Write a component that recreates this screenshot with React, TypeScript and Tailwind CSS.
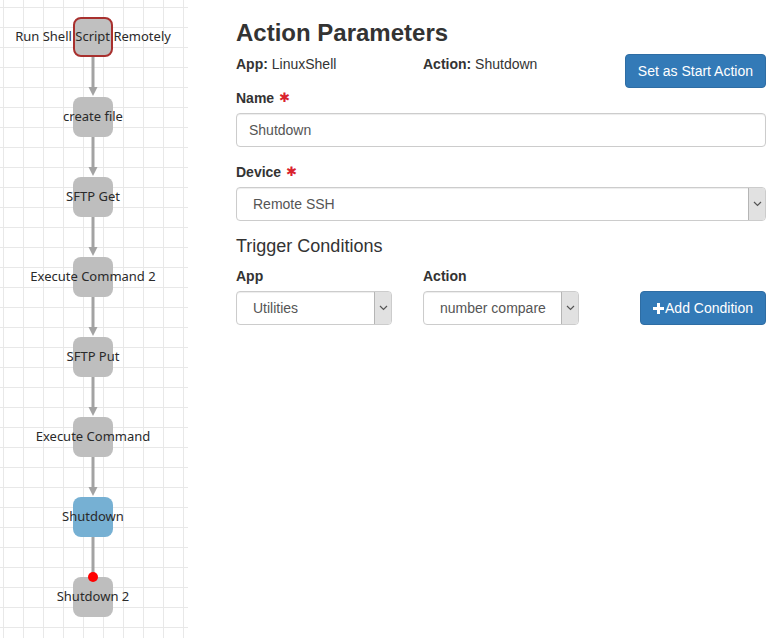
import React from "react";

const nodes = [
  { label: "Run Shell Script Remotely", kind: "start" },
  { label: "create file", kind: "normal" },
  { label: "SFTP Get", kind: "normal" },
  { label: "Execute Command 2", kind: "normal" },
  { label: "SFTP Put", kind: "normal" },
  { label: "Execute Command", kind: "normal" },
  { label: "Shutdown", kind: "selected" },
  { label: "Shutdown 2", kind: "normal" },
];

function Chevron() {
  return (
    <svg width="9" height="6" viewBox="0 0 9 6" className="block">
      <path d="M1 1 L4.5 4.5 L8 1" fill="none" stroke="#555" strokeWidth="1.2" />
    </svg>
  );
}

function FakeSelect({ value, className }: { value: string; className: string }) {
  return (
    <div
      className={`flex h-[34px] items-stretch rounded-[4px] border border-[#ccc] bg-white shadow-[inset_0_1px_1px_rgba(0,0,0,0.075)] ${className}`}
    >
      <div className="flex flex-1 items-center pl-[16px] text-[14px] text-[#555]">{value}</div>
      <div className="flex w-[17px] items-center justify-center rounded-r-[3px] border-l border-[#b5b5b5] bg-[#e1e1e1]">
        <Chevron />
      </div>
    </div>
  );
}

function Asterisk() {
  return <span className="ml-[5px] font-['DejaVu_Sans',sans-serif] text-[13px] text-[#d9232d]">✱</span>;
}

export default function App() {
  return (
    <div className="flex h-[638px] w-[775px] bg-white font-['Liberation_Sans',Arial,sans-serif] text-[#333]">
      {/* Canvas */}
      <div className="relative h-[638px] w-[188px] shrink-0 bg-white bg-[linear-gradient(to_right,#e8e8e8_1px,transparent_1px),linear-gradient(to_bottom,#e8e8e8_1px,transparent_1px)] bg-[size:20px_20px] bg-[position:3px_7px]">
        <svg className="absolute left-0 top-0" width="188" height="638">
          {nodes.slice(0, -1).map((_, i) => {
            const y0 = 57 + 80 * i;
            const last = i === nodes.length - 2;
            return (
              <g key={i}>
                <line x1="93" y1={y0} x2="93" y2={last ? 577 : y0 + 31} stroke="#a3a3a3" strokeWidth="3" />
                {!last && (
                  <polygon points={`88.5,${y0 + 30} 97.5,${y0 + 30} 93,${y0 + 39}`} fill="#a3a3a3" />
                )}
              </g>
            );
          })}
        </svg>
        {nodes.map((n, i) => {
          const top = 17 + 80 * i;
          const box =
            n.kind === "start"
              ? "bg-[#c0c0c0] border-2 border-[#a8302e]"
              : n.kind === "selected"
              ? "bg-[#76b0d3]"
              : "bg-[#bebebe]";
          return (
            <div
              key={i}
              className={`absolute left-[73px] h-[40px] w-[40px] rounded-[8px] ${box}`}
              style={{ top }}
            />
          );
        })}
        {nodes.map((n, i) => {
          const top = 17 + 80 * i;
          return (
            <div
              key={"t" + i}
              className="absolute left-[-7px] flex h-[40px] w-[200px] items-center justify-center whitespace-nowrap font-['Noto_Sans',sans-serif] text-[13px] text-[#2a2a2a]"
              style={{ top }}
            >
              {n.label}
            </div>
          );
        })}
        <div className="absolute left-[88px] top-[572px] h-[10px] w-[10px] rounded-full bg-[#ff0000]" />
      </div>

      {/* Panel */}
      <div className="flex-1 pl-[48px] pr-[9px]">
        <h3 className="mt-[20px] text-[24px] font-bold leading-[26px]">Action Parameters</h3>
        <div className="mt-[8px] flex h-[34px] items-start text-[14px] leading-[20px]">
          <div className="w-[187px]">
            <b>App:</b> LinuxShell
          </div>
          <div className="flex-1">
            <b>Action:</b> Shutdown
          </div>
          <button className="h-[34px] rounded-[4px] border border-[#2e6da4] bg-[#337ab7] px-[12px] text-[14px] text-white">
            Set as Start Action
          </button>
        </div>

        <div className="flex h-[20px] items-center text-[14px] font-bold">
          Name <Asterisk />
        </div>
        <div className="mt-[5px] flex h-[34px] items-center rounded-[4px] border border-[#ccc] pl-[12px] text-[14px] text-[#555] shadow-[inset_0_1px_1px_rgba(0,0,0,0.075)]">
          Shutdown
        </div>

        <div className="mt-[15px] flex h-[20px] items-center text-[14px] font-bold">
          Device <Asterisk />
        </div>
        <FakeSelect value="Remote SSH" className="mt-[5px] w-full" />

        <div className="mt-[15px] text-[18px] leading-[20px]">Trigger Conditions</div>
        <div className="mt-[10px] flex items-end">
          <div className="w-[187px]">
            <div className="flex h-[20px] items-center text-[14px] font-bold">App</div>
            <FakeSelect value="Utilities" className="mt-[5px] w-[156px]" />
          </div>
          <div className="w-[217px]">
            <div className="flex h-[20px] items-center text-[14px] font-bold">Action</div>
            <FakeSelect value="number compare" className="mt-[5px] w-[156px]" />
          </div>
          <button className="flex h-[34px] w-[126px] items-center justify-center rounded-[4px] border border-[#2e6da4] bg-[#337ab7] text-[14px] text-white">
            <svg width="11" height="11" viewBox="0 0 11 11" className="mr-[1px]">
              <path d="M4 0h3v4h4v3H7v4H4V7H0V4h4z" fill="#fff" />
            </svg>
            Add Condition
          </button>
        </div>
      </div>
    </div>
  );
}
